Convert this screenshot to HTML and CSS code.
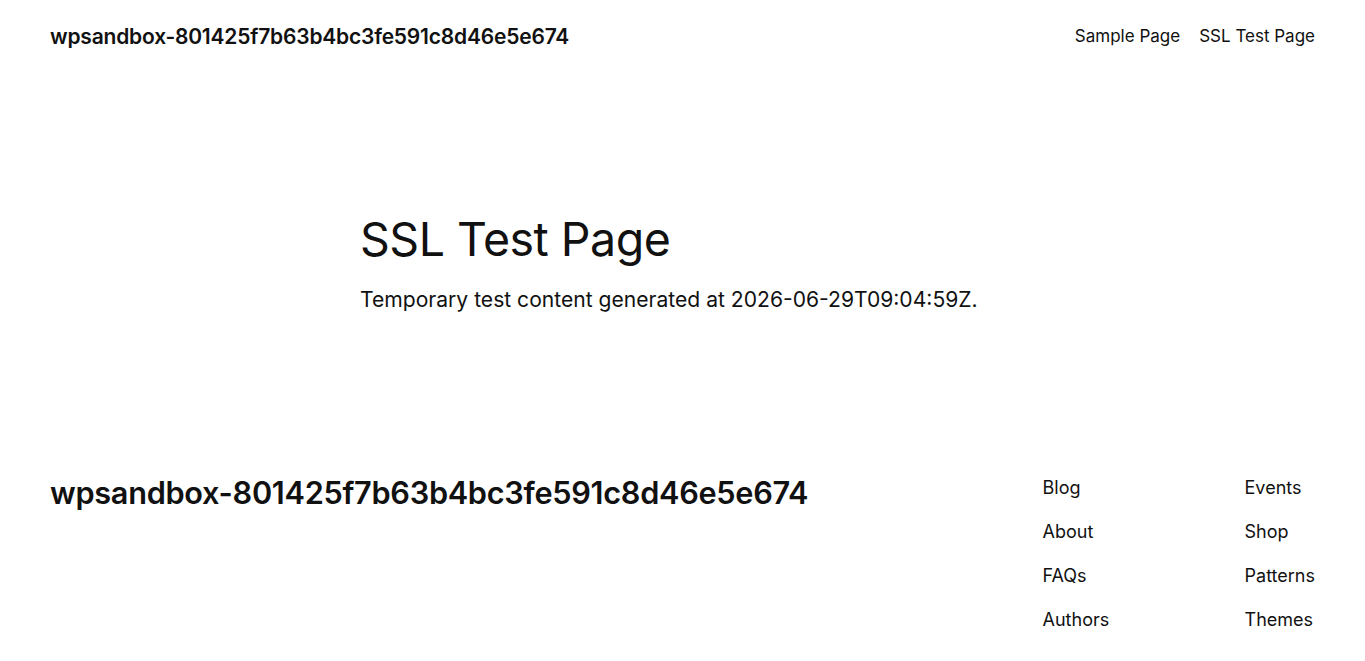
FILE: index.html
```html
<!DOCTYPE html>
<html lang="en">
<head>
<meta charset="utf-8">
<title>SSL Test Page</title>
<link rel="stylesheet" href="styles.css">
</head>
<body>
<header class="site-header">
  <p class="site-title">wpsandbox-801425f7b63b4bc3fe591c8d46e5e674</p>
  <nav class="main-nav">
    <a href="#">Sample Page</a>
    <a href="#">SSL Test Page</a>
  </nav>
</header>
<main class="content">
  <h1 class="page-title">SSL Test Page</h1>
  <p class="page-text">Temporary test content generated at 2026-06-29T09:04:59Z.</p>
</main>
<footer class="site-footer">
  <p class="footer-title">wpsandbox-801425f7b63b4bc3fe591c8d46e5e674</p>
  <div class="footer-cols">
    <ul class="footer-list">
      <li><a href="#">Blog</a></li>
      <li><a href="#">About</a></li>
      <li><a href="#">FAQs</a></li>
      <li><a href="#">Authors</a></li>
    </ul>
    <ul class="footer-list">
      <li><a href="#">Events</a></li>
      <li><a href="#">Shop</a></li>
      <li><a href="#">Patterns</a></li>
      <li><a href="#">Themes</a></li>
    </ul>
  </div>
</footer>
</body>
</html>
```
FILE: styles.css
```css
* { box-sizing: border-box; }
html, body { margin: 0; padding: 0; background: #fff; }
body {
  font-family: Inter, "Noto Sans", sans-serif;
  color: #111111;
  -webkit-font-smoothing: antialiased;
}
a { color: inherit; text-decoration: none; }
p { margin: 0; }

.site-header {
  display: flex;
  justify-content: space-between;
  align-items: center;
  padding: 12px 50px 0 50px;
  height: 60px;
}
.site-title {
  font-size: 21px;
  font-weight: 600;
  letter-spacing: -0.2px;
}
.main-nav {
  display: flex;
  gap: 19px;
  font-size: 17px;
  font-weight: 400;
}

.content {
  width: 645px;
  margin: 0 auto;
  padding-top: 154px;
  height: 402px;
}
.page-title {
  margin: 0;
  font-size: 46.5px;
  font-weight: 400;
  line-height: 1.1;
  letter-spacing: -0.5px;
}
.page-text {
  margin-top: 22px;
  font-size: 21.1px;
  font-weight: 400;
}

.site-footer {
  display: flex;
  justify-content: space-between;
  align-items: flex-start;
  padding: 0 50px;
}
.footer-title {
  font-size: 30.7px;
  font-weight: 600;
  letter-spacing: -0.3px;
  margin-top: 12px;
}
.footer-cols {
  display: grid;
  grid-template-columns: 202px auto;
  padding-top: 14px;
}
.footer-list {
  list-style: none;
  margin: 0;
  padding: 0;
  display: flex;
  flex-direction: column;
  gap: 20px;
  font-size: 18px;
  line-height: 24px;
}
```
